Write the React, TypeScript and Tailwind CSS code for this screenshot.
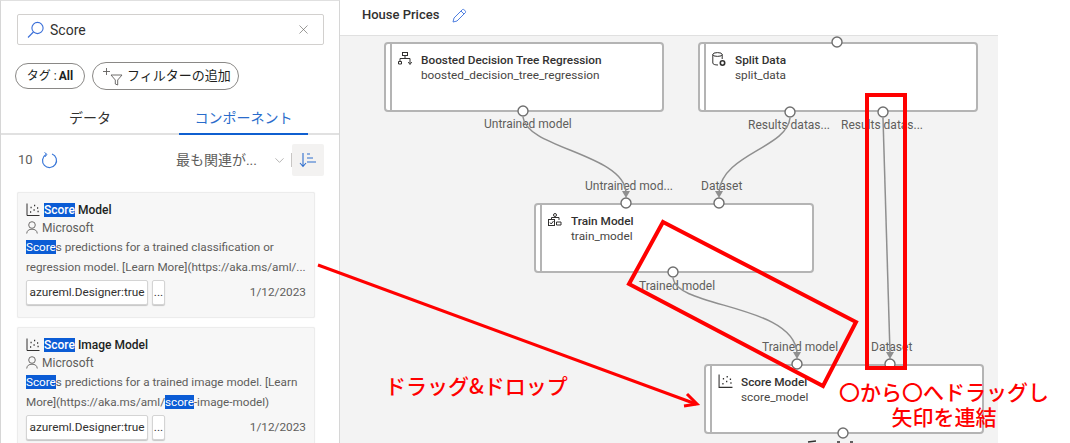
import React from "react";
import { X, ChevronDown } from "lucide-react";

const UI_FONT = "font-['Roboto','Noto_Sans_CJK_JP',sans-serif]";

// small hand drawn icons
const SearchIcon = () => (
    <svg width="18" height="18" viewBox="0 0 18 18" fill="none" stroke="#3b6fd8" strokeWidth="1.1">
        <circle cx="10.5" cy="7" r="5.6" />
        <path d="M6.4 11 L1 16.5" />
    </svg>
);

const ScatterIcon = ({ size = 14 }: { size?: number }) => (
    <svg width={size} height={size} viewBox="0 0 14 14" fill="none" stroke="#323130" strokeWidth="1">
        <path d="M1 0.5 V12.5 H13.5" />
        <path d="M4 9h1.2M4.5 4.5h1.2M7.5 7h1.2M8 2.5h1.2M11 5h1.2M11.5 8.5h1.2" strokeWidth="1.4" />
    </svg>
);

const PersonIcon = () => (
    <svg width="12" height="13" viewBox="0 0 12 13" fill="none" stroke="#605e5c" strokeWidth="0.9">
        <circle cx="6" cy="4" r="3.3" />
        <path d="M0.7 12.5 C1 9.5 3 8.2 6 8.2 C9 8.2 11 9.5 11.3 12.5" />
    </svg>
);

const TreeIcon = () => (
    <svg width="14" height="14" viewBox="0 0 14 14" fill="none" stroke="#323130" strokeWidth="1">
        <rect x="4.5" y="0.5" width="5" height="3" />
        <path d="M7 3.5 V6.5 M2 9 V6.5 H12 V11 M0.5 9.5 h3 v2.5 h-3z M10.3 10 L12 12.5 L13.7 10" />
    </svg>
);

const DataIcon = () => (
    <svg width="15" height="15" viewBox="0 0 15 15" fill="none" stroke="#323130" strokeWidth="1">
        <ellipse cx="5.5" cy="2.5" rx="4.7" ry="1.9" />
        <path d="M0.8 2.5 V11 C0.8 12.3 3 13 6 13 M10.2 2.5 V7" />
        <circle cx="10.5" cy="11" r="2.2" strokeWidth="1.6" />
    </svg>
);

const TrainIcon = () => (
    <svg width="14" height="14" viewBox="0 0 14 14" fill="none" stroke="#323130" strokeWidth="1">
        <rect x="0.5" y="6.5" width="6" height="6" />
        <path d="M2 9.5 L3.2 11 L5.5 8" />
        <circle cx="7" cy="2" r="1.5" />
        <path d="M3.5 6.5 V4.5 H11 V7 M8.5 9h4.5v3h-4.5z" />
    </svg>
);

const Hl = ({ children }: { children: React.ReactNode }) => (
    <span className="bg-[#0b5cd5] text-white">{children}</span>
);

interface CardProps {
    title: string;
    lines: React.ReactNode[];
}

const ComponentCard: React.FC<CardProps> = ({ title, lines }) => (
    <div className="h-[126px] w-[298px] shrink-0 rounded-[2px] border border-[#ececec] bg-[#f7f7f7] pl-[8px] pr-[8px] pt-[8px] shadow-[0_0_1px_rgba(0,0,0,0.1)]">
        <div className="flex h-[18px] items-center gap-[4px] text-[12px] font-medium leading-[18px] text-[#201f1e]">
            <ScatterIcon />
            <span><Hl>Score</Hl> {title}</span>
        </div>
        <div className="mb-[1px] flex h-[17px] items-center gap-[4px] text-[12px] leading-[18px] text-[#605e5c]">
            <PersonIcon />
            <span>Microsoft</span>
        </div>
        {lines.map((line, i) => (
            <div key={i} className="h-[20px] whitespace-nowrap text-[11.7px] leading-[20px] text-[#605e5c]">{line}</div>
        ))}
        <div className="mt-[3px] flex items-center text-[11.8px] text-[#323130]">
            <span className="flex h-[25px] w-[122px] items-center justify-center rounded-[2px] border border-[#d4d4d4] bg-white shadow-[0_1px_1px_rgba(0,0,0,0.2)] whitespace-nowrap">azureml.Designer:true</span>
            <span className="ml-[4px] flex h-[25px] w-[13px] items-center justify-center rounded-[2px] border border-[#d4d4d4] bg-white shadow-[0_1px_1px_rgba(0,0,0,0.2)]">...</span>
            <span className="ml-auto text-[#605e5c]">1/12/2023</span>
        </div>
    </div>
);

const Sidebar = () => (
    <aside className="h-[443px] w-[340px] shrink-0 overflow-hidden border-x border-t border-[#d6d6d6] border-t-[#e0e0e0] pt-[13px]">
        <div className="mx-[16px] flex h-[31px] w-[307px] items-center rounded-[2px] border border-[#d2d0ce] pl-[9px] pr-[12px] text-[14px] text-[#323130]">
            <SearchIcon />
            <span className="ml-[5px] pt-[1px]">Score</span>
            <X className="ml-auto h-[15px] w-[15px] text-[#605e5c]" strokeWidth={1} />
        </div>

        <div className="ml-[14px] mt-[17px] flex items-center gap-[7px]">
            <div className="flex h-[26px] w-[70px] items-center justify-center rounded-full border border-[#8a8886] text-[12px] text-[#201f1e]">
                タグ : <span className="ml-[2px] font-bold">All</span>
            </div>
            <div className="relative flex h-[28px] w-[147px] items-center rounded-full border border-[#8a8886] pl-[34px] text-[13px] text-[#201f1e] whitespace-nowrap">
                <svg className="absolute left-[9px] top-[4px]" width="22" height="20" viewBox="0 0 22 20" fill="none" stroke="#605e5c" strokeWidth="0.9">
                    <path d="M1 4.5h7M4.5 1v7" />
                    <path d="M9 8h11l-4.3 5v5l-2.4-1v-4z" />
                </svg>
                フィルターの追加
            </div>
        </div>

        <div className="mt-[14px] flex h-[31px] border-b-2 border-[#e1e1e1] text-[14px]">
            <div className="ml-[68px] pt-[4px] text-[#323130]">データ</div>
            <div className="relative ml-[68px] -mb-[2px] w-[129px] border-b-[2px] border-[#0f5fd0] pt-[4px] text-center text-[#2a6ccb]">コンポーネント</div>
        </div>

        <div className="mt-[9px] flex h-[32px] items-center pl-[17px] text-[13px] text-[#605e5c]">
            <span>10</span>
            <svg className="ml-[8px]" width="17" height="17" viewBox="0 0 17 17" fill="none" stroke="#3b78d8" strokeWidth="1.2">
                <path d="M5 2.5 A7 7 0 1 0 11 2" />
                <path d="M3.5 0.5 L6 2.4 L3.8 5" strokeWidth="1" />
            </svg>
            <span className="ml-auto text-[14px] text-[#605e5c]">最も関連が...</span>
            <ChevronDown className="ml-[15px] h-[15px] w-[15px] text-[#8a8886]" strokeWidth={1} />
            <div className="ml-[4px] h-[14px] w-px bg-[#c8c6c4]" />
            <div className="mr-[15px] flex h-[32px] w-[32px] items-center justify-center rounded-[2px] bg-[#f3f2f1]">
                <svg width="18" height="16" viewBox="0 0 18 16" fill="none" stroke="#2f6fce" strokeWidth="1.1">
                    <path d="M4 1v13M1 11l3 3.5L7 11" />
                    <path d="M8 2h3M8 6h6M8 10h9" />
                </svg>
            </div>
        </div>

        <div className="ml-[16px] mt-[16px] flex flex-col gap-[9px]">
            <ComponentCard
                title="Model"
                lines={[
                    <><Hl>Score</Hl>s predictions for a trained classification or</>,
                    <>regression model. [Learn More](https://aka.ms/aml/...</>,
                ]}
            />
            <ComponentCard
                title="Image Model"
                lines={[
                    <><Hl>Score</Hl>s predictions for a trained image model. [Learn</>,
                    <>More](https://aka.ms/aml/<Hl>score</Hl>-image-model)</>,
                ]}
            />
        </div>
    </aside>
);

interface NodeProps {
    pos: string;
    icon: React.ReactNode;
    title: string;
    name: string;
}

const PipelineNode: React.FC<NodeProps> = ({ pos, icon, title, name }) => (
    <div className={`absolute flex h-[70px] w-[280px] rounded-[4px] border-2 border-[#b4b4b4] bg-white ${pos}`}>
        <div className="w-[6px] shrink-0 border-r-2 border-[#b4b4b4]" />
        <div className="w-[20px] pl-[6px] pt-[8px]">{icon}</div>
        <div className="ml-[9px] pt-[9px] text-[11.8px] leading-[15px]">
            <div className="font-medium text-[#323130]">{title}</div>
            <div className="text-[#484644]">{name}</div>
        </div>
    </div>
);

const PortLabel = ({ pos, children }: { pos: string; children: React.ReactNode }) => (
    <span className={`absolute whitespace-nowrap text-[12px] leading-[14px] text-[#605e5c] ${pos}`}>{children}</span>
);

// coordinates inside the canvas, which starts at (340, 36)
const PORTS = [
    [183, 75], [497, 6], [450, 76], [543, 76],
    [286, 167], [379, 167], [333, 236],
    [457, 328], [550, 328], [503, 397],
];

const Canvas = () => (
    <div className="relative h-[407px] w-[658px] overflow-hidden bg-[#f3f3f3]">
        <PipelineNode pos="left-[44px] top-[6px]" icon={<TreeIcon />} title="Boosted Decision Tree Regression" name="boosted_decision_tree_regression" />
        <PipelineNode pos="left-[358px] top-[6px]" icon={<DataIcon />} title="Split Data" name="split_data" />
        <PipelineNode pos="left-[194px] top-[167px]" icon={<TrainIcon />} title="Train Model" name="train_model" />
        <PipelineNode pos="left-[364px] top-[328px]" icon={<ScatterIcon size={15} />} title="Score Model" name="score_model" />

        <PortLabel pos="left-[144px] top-[81px]">Untrained model</PortLabel>
        <PortLabel pos="left-[245px] top-[143px]">Untrained mod...</PortLabel>
        <PortLabel pos="left-[361px] top-[143px]">Dataset</PortLabel>
        <PortLabel pos="left-[408px] top-[82px]">Results datas...</PortLabel>
        <PortLabel pos="left-[501px] top-[82px]">Results datas...</PortLabel>
        <PortLabel pos="left-[299px] top-[243px]">Trained model</PortLabel>
        <PortLabel pos="left-[422px] top-[304px]">Trained model</PortLabel>
        <PortLabel pos="left-[531px] top-[304px]">Dataset</PortLabel>

        <svg className="absolute left-0 top-0" width="658" height="407" viewBox="0 0 658 407" fill="none">
            <g stroke="#8f8f8f" strokeWidth="1.5">
                <path d="M183 81 C186 112 283 118 286 156" />
                <path d="M450 82 C447 112 382 118 379 156" />
                <path d="M543 82 L550 317" />
                <path d="M333 242 C336 272 454 268 457 317" />
            </g>
            <g fill="#8f8f8f">
                <path d="M282 155h8l-4 7z" />
                <path d="M375 155h8l-4 7z" />
                <path d="M453 316h8l-4 7z" />
                <path d="M546 316h8l-4 7z" />
            </g>
            {PORTS.map(([cx, cy], i) => (
                <circle key={i} cx={cx} cy={cy} r="5" fill="white" stroke="#6f6f6f" strokeWidth="1.4" />
            ))}
            <path d="M468 406 l8 -1 M497 406 h3 M510 406 h3" stroke="#323130" strokeWidth="1.4" />
            <g stroke="#ff0000" strokeWidth="4">
                <rect x="527" y="59" width="38" height="273" />
                <path d="M323 186 L516 286 L483 350 L289 248 Z" />
            </g>
        </svg>
    </div>
);

export default function App() {
    return (
        <div className={`relative flex h-[443px] w-[1070px] overflow-hidden bg-white ${UI_FONT}`}>
            <Sidebar />
            <main className="w-[658px] shrink-0">
                <header className="flex h-[36px] items-center border-b border-[#e0e0e0] pb-[5px] pl-[22px]">
                    <span className="text-[13px] font-medium text-[#323130]">House Prices</span>
                    <svg className="ml-[13px]" width="15" height="15" viewBox="0 0 15 15" fill="none" stroke="#4f7fe0" strokeWidth="1">
                        <path d="M1 14 L2 10 L10.5 1.5 C11.5 0.6 14.4 3.4 13.5 4.5 L5 13 Z M9 3 L12 6" />
                    </svg>
                </header>
                <Canvas />
            </main>

            {/* annotations drawn over the screenshot */}
            <svg className="absolute left-0 top-0" width="1070" height="443" viewBox="0 0 1070 443" fill="none" stroke="#ff0000">
                <path d="M318 265 L696 404" strokeWidth="3" />
                <path d="M687 394 L697 404 L684 406" strokeWidth="3" />
            </svg>
            <span className="absolute left-[385px] top-[373px] text-[21px] font-medium leading-[24px] text-[#ff0000] whitespace-nowrap font-['Noto_Sans_CJK_JP',sans-serif]">ドラッグ&ドロップ</span>
            <div className="absolute left-[839px] top-[379px] w-[210px] text-center text-[21px] font-medium leading-[25px] text-[#ff0000] whitespace-nowrap font-['Noto_Sans_CJK_JP',sans-serif]">
                〇から〇へドラッグし
                <br />
                矢印を連結
            </div>
        </div>
    );
}
